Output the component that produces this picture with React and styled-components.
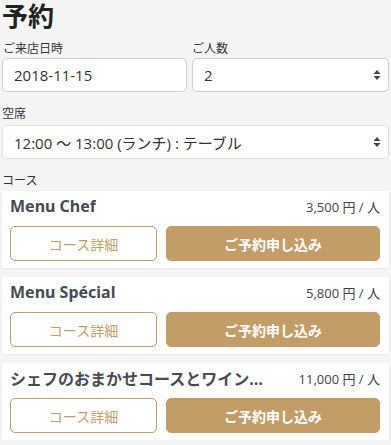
import React from "react";
import styled, { createGlobalStyle } from "styled-components";

const GOLD = "#c29d68";

const Global = createGlobalStyle`
  html, body { margin: 0; padding: 0; background: #f4f4f4; }
  body { font-family: "Open Sans", "Noto Sans CJK JP", sans-serif; color: #333; }
  * { box-sizing: border-box; }
`;

const Page = styled.div`
  width: 391px;
  padding: 0 2px;
  display: flex;
  flex-direction: column;
`;

const Title = styled.h1`
  margin: 0;
  font-family: "Noto Sans CJK JP", sans-serif;
  font-size: 26px;
  line-height: 32px;
  font-weight: 700;
  color: #222;
  margin-top: -1px;
`;

const Row = styled.div`
  display: grid;
  grid-template-columns: 185px 1fr;
  column-gap: 5px;
  margin-top: 9px;
`;

const Group = styled.div`
  display: flex;
  flex-direction: column;
  gap: ${(p) => p.$gap || 2}px;
  margin-top: ${(p) => p.$mt || 0}px;
`;

const Label = styled.div`
  font-family: "Noto Sans CJK JP", sans-serif;
  font-size: 12px;
  line-height: 16px;
  color: #333;
  padding-left: ${(p) => p.$pl || 0}px;
`;

const Field = styled.div`
  height: 34px;
  background: #fff;
  border: 1px solid ${(p) => (p.$accent ? "#eadfce" : "#cfcfcf")};
  border-radius: 5px;
  display: flex;
  align-items: center;
  justify-content: space-between;
  padding: 0 7px 0 11px;
  font-family: "Open Sans", "Noto Sans CJK JP", sans-serif;
  font-size: 15px;
  color: #333;
`;

const Arrows = () => (
  <svg width="8" height="12" viewBox="0 0 8 12">
    <path d="M4 1 L7.5 5 H0.5 Z" fill="#444" />
    <path d="M4 11 L7.5 7 H0.5 Z" fill="#444" />
  </svg>
);

const Cards = styled.div`
  display: flex;
  flex-direction: column;
  gap: 9px;
  margin-top: 3px;
`;

const Card = styled.div`
  background: #fff;
  box-shadow: 0 1px 2px rgba(0, 0, 0, 0.05);
  padding: 4px 9px 7px 8px;
  display: flex;
  flex-direction: column;
  gap: 9px;
`;

const CardHead = styled.div`
  display: flex;
  align-items: center;
  justify-content: space-between;
  gap: 28px;
  height: 22px;
`;

const CardName = styled.div`
  font-family: "Noto Sans", "Noto Sans CJK JP", sans-serif;
  font-size: 16px;
  font-weight: 700;
  color: #474c53;
  white-space: nowrap;
  overflow: hidden;
  text-overflow: ellipsis;
  min-width: 0;
`;

const Price = styled.div`
  font-family: "Open Sans", "Noto Sans CJK JP", sans-serif;
  font-size: 13px;
  color: #444;
  white-space: nowrap;
  flex-shrink: 0;
`;

const Buttons = styled.div`
  display: grid;
  grid-template-columns: 147px 1fr;
  column-gap: 9px;
`;

const Button = styled.button`
  height: 35px;
  border-radius: 5px;
  border: 1px solid ${GOLD};
  background: ${(p) => (p.$primary ? GOLD : "#fff")};
  color: ${(p) => (p.$primary ? "#fff" : GOLD)};
  font-family: "Noto Sans CJK JP", sans-serif;
  font-size: 14px;
  font-weight: ${(p) => (p.$primary ? 700 : 400)};
  padding: 0;
  cursor: pointer;
`;

const courses = [
  { name: "Menu Chef", price: "3,500 円 / 人" },
  { name: "Menu Spécial", price: "5,800 円 / 人" },
  { name: "シェフのおまかせコースとワインペアリング", price: "11,000 円 / 人" },
];

export default function App() {
  return (
    <>
      <Global />
      <Page>
        <Title>予約</Title>
        <Row>
          <Group>
            <Label $pl={1}>ご来店日時</Label>
            <Field>2018-11-15</Field>
          </Group>
          <Group>
            <Label>ご人数</Label>
            <Field>
              2
              <Arrows />
            </Field>
          </Group>
        </Row>
        <Group $mt={13} $gap={4}>
          <Label>空席</Label>
          <Field $accent>
            12:00 〜 13:00 (ランチ) : テーブル
            <Arrows />
          </Field>
        </Group>
        <Group $mt={13}>
          <Label>コース</Label>
        </Group>
        <Cards>
          {courses.map((c) => (
            <Card key={c.name}>
              <CardHead>
                <CardName>{c.name}</CardName>
                <Price>{c.price}</Price>
              </CardHead>
              <Buttons>
                <Button>コース詳細</Button>
                <Button $primary>ご予約申し込み</Button>
              </Buttons>
            </Card>
          ))}
        </Cards>
      </Page>
    </>
  );
}
